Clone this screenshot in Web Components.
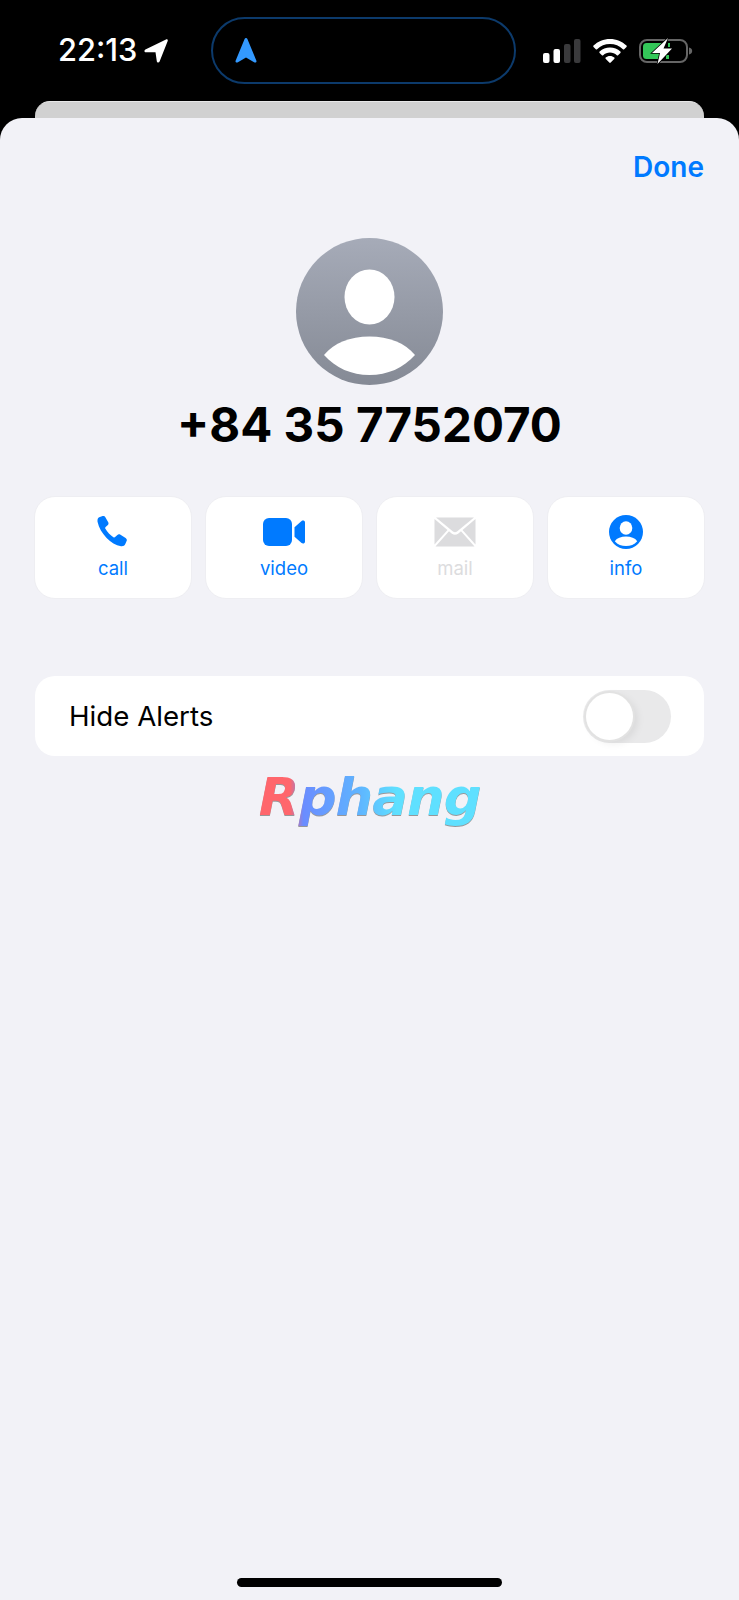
<!DOCTYPE html>
<html lang="en">
<head>
<meta charset="utf-8">
<title>Contact details</title>
<style>
    html, body {
        margin: 0;
        background: #000;
    }
    body {
        width: 739px;
        height: 1600px;
        overflow: hidden;
        font-family: 'Inter', 'Liberation Sans', sans-serif;
    }
</style>
</head>
<body>
<status-bar time="22:13"></status-bar>
<card-sheet>
    <contact-header name="+84 35 7752070"></contact-header>
    <action-row>
        <action-button label="call">
            <svg width="32" height="32" viewBox="0 0 32 32"><path fill="currentColor" d="M2.2 1.3 5.6 0c1-.4 2 0 2.6 1l3 5.3c.5.9.4 1.9-.3 2.6L8.600 11c-.5.500-.5 1.100-.2 1.700 1.600 2.900 5.100 6.700 8 8.500.6.400 1.200.4 1.700-.1l2.300-2.200c.8-.8 1.800-.9 2.700-.3l5.500 3.400c1.100.7 1.500 1.700 1.100 2.700l-1.400 3.400c-.7 1.700-2.300 2.500-4.300 2.200-5.200-.7-10.100-3.800-14.400-8.300C5.300 17.300 1.700 12 .6 6 .2 3.900.700 2.100 2.200 1.300Z"/></svg>
        </action-button>
        <action-button label="video">
            <svg width="42" height="28" viewBox="0 0 42 28"><rect x="0" y="0" width="29" height="28" rx="6" fill="currentColor"/><path fill="currentColor" d="M31.500 9.200 38.600 3c1.200-1 3.400-.4 3.400 1.300v19.400c0 1.700-2.200 2.300-3.400 1.300l-7.100-6.200Z"/></svg>
        </action-button>
        <action-button label="mail" disabled>
            <svg width="42" height="30" viewBox="0 0 42 30"><path fill="currentColor" d="M2 .5h38L23 14.500c-1.300 1-2.700 1-4 0Z"/><path fill="currentColor" d="M.5 2 13.500 13 .5 27.500Z"/><path fill="currentColor" d="M41.500 2 28.500 13 41.500 27.500Z"/><path fill="currentColor" d="M15 14.300 17.900 16.700c1.900 1.500 4.300 1.500 6.200 0L27 14.300 40.500 29.500H1.500Z"/></svg>
        </action-button>
        <action-button label="info">
            <svg width="34" height="34" viewBox="0 0 34 34"><circle cx="17" cy="17" r="17" fill="currentColor"/><ellipse cx="17" cy="13" rx="6.300" ry="6.800" fill="#fff"/><path fill="#fff" d="M5.800 26.200C8 23 12 21.500 17 21.500s9 1.500 11.200 4.700C25.300 29.500 21.500 31 17 31S8.700 29.500 5.800 26.200Z"/></svg>
        </action-button>
    </action-row>
    <toggle-row label="Hide Alerts"></toggle-row>
    <logo-mark text="Rphang"></logo-mark>
    <home-bar></home-bar>
</card-sheet>

<script>
    class StatusBar extends HTMLElement {
        constructor() {
            super();
            this.attachShadow({ mode: 'open' });
        }

        connectedCallback() {
            const time = this.getAttribute('time') || '';

            this.shadowRoot.innerHTML = `
                <style>
                    :host {
                        display: block;
                        background: #000;
                    }

                    .bar {
                        height: 101px;
                        padding: 17px 0 0 58px;
                        box-sizing: border-box;
                        display: flex;
                        align-items: flex-start;
                    }

                    .clock {
                        width: 153px;
                        height: 67px;
                        display: flex;
                        align-items: center;
                        gap: 7px;
                        color: #fff;
                        font: 500 30.800px/1 'Inter', sans-serif;
                    }

                    .island {
                        width: 305px;
                        height: 67px;
                        box-sizing: border-box;
                        border: 2px solid #0c3a6b;
                        border-radius: 34px;
                        background: #000;
                        display: flex;
                        align-items: center;
                        padding-left: 22px;
                    }

                    .indicators {
                        height: 67px;
                        margin-left: 27px;
                        display: flex;
                        align-items: center;
                        gap: 12px;
                    }

                    svg { display: block; }
                </style>
                <div class="bar">
                    <div class="clock">
                        <span>${time}</span>
                        <svg width="24" height="24" viewBox="0 0 24 24"><path fill="#fff" d="M22 .4c1.200-.5 2.100.4 1.700 1.600L15.600 22.500c-.6 1.500-2.500 1.400-2.800-.2l-1.300-9H2c-1.700 0-2.200-2-.6-2.800Z"/></svg>
                    </div>
                    <div class="island">
                        <svg width="22" height="25" viewBox="0 0 22 25"><path fill="#3399ff" d="M11 0c.7 0 1.100.4 1.400 1.100l9 21.600c.5 1.300-.7 2.300-1.900 1.700L11 19.500l-8.500 4.900c-1.200.6-2.400-.4-1.900-1.700l9-21.600C9.900.4 10.300 0 11 0Z"/></svg>
                    </div>
                    <div class="indicators">
                        <svg width="38" height="24" viewBox="0 0 38 24">
                            <rect x="0" y="14" width="6.500" height="10" rx="2" fill="#fff"/>
                            <rect x="10.500" y="10" width="6.500" height="14" rx="2" fill="#fff"/>
                            <rect x="21" y="5" width="6.500" height="19" rx="2" fill="#3a3a3c"/>
                            <rect x="31" y="0" width="6.500" height="24" rx="2" fill="#3a3a3c"/>
                        </svg>
                        <svg width="34" height="24" viewBox="0 0 34 24">
                            <path fill="#fff" d="M17 0c6.400 0 12.200 2.500 16.500 6.600.4.400.4.900 0 1.300l-2.300 2.300c-.4.400-.9.400-1.300 0C26.500 7 22 5.100 17 5.100S7.500 7 4.100 10.200c-.4.400-.9.400-1.300 0L.5 7.900c-.4-.4-.4-.9 0-1.300C4.800 2.500 10.600 0 17 0Z"/>
                            <path fill="#fff" d="M17 8.500c4 0 7.600 1.500 10.400 4.100.4.400.4.900 0 1.300l-2.300 2.300c-.4.400-.9.400-1.300 0-1.800-1.600-4.200-2.600-6.800-2.600s-5 1-6.800 2.600c-.4.400-.9.400-1.300 0l-2.300-2.300c-.4-.4-.4-.9 0-1.300C9.400 10 13 8.500 17 8.500Z"/>
                            <path fill="#fff" d="M17 17c1.700 0 3.200.6 4.300 1.600.4.300.4.800.1 1.100l-3.700 3.900c-.4.400-1 .4-1.400 0l-3.700-3.900c-.3-.3-.3-.8.100-1.100 1.100-1 2.600-1.600 4.300-1.600Z"/>
                        </svg>
                        <svg width="54" height="26" viewBox="0 0 54 26">
                            <rect x="1" y="2" width="47" height="22" rx="7" fill="none" stroke="#666" stroke-width="2"/>
                            <path fill="#34c759" d="M7.500 5H24v16H7.500A3.500 3.500 0 0 1 4 17.500v-9A3.500 3.500 0 0 1 7.500 5Z"/>
                            <path fill="#34c759" d="M29 5h2v4h-2zM27 17h3v4h-3z"/>
                            <path fill="#fff" stroke="#000" stroke-width="1.500" paint-order="stroke" d="M29 0 13 15h8L18.500 26 33 10.500h-8.500Z"/>
                            <path fill="#666" d="M50 9.500c2 .3 3.200 1.700 3.200 3.500s-1.200 3.200-3.200 3.500Z"/>
                        </svg>
                    </div>
                </div>
            `;
        }
    }

    class CardSheet extends HTMLElement {
        constructor() {
            super();
            this.attachShadow({ mode: 'open' });
        }

        connectedCallback() {
            this.shadowRoot.innerHTML = `
                <style>
                    :host {
                        display: block;
                    }

                    .behind {
                        height: 17px;
                        margin: 0 35px;
                        box-sizing: border-box;
                        border-top: 1px solid #e8e8e8;
                        background: #d1d1d1;
                        border-radius: 15px 15px 0 0;
                    }

                    .sheet {
                        height: 1482px;
                        background: #f2f2f7;
                        border-radius: 22px 22px 0 0;
                        padding: 0 35px;
                        box-sizing: border-box;
                        display: flex;
                        flex-direction: column;
                    }

                    .top {
                        display: flex;
                        justify-content: flex-end;
                        padding-top: 32px;
                    }

                    .done {
                        color: #007aff;
                        font: 600 28px/34px 'Inter', sans-serif;
                    }
                </style>
                <div class="behind"></div>
                <div class="sheet">
                    <div class="top"><span class="done">Done</span></div>
                    <slot></slot>
                </div>
            `;
        }
    }

    class ContactHeader extends HTMLElement {
        constructor() {
            super();
            this.attachShadow({ mode: 'open' });
        }

        connectedCallback() {
            const name = this.getAttribute('name') || '';

            this.shadowRoot.innerHTML = `
                <style>
                    :host {
                        display: flex;
                        flex-direction: column;
                        align-items: center;
                        padding-top: 54px;
                    }

                    svg { display: block; }

                    .name {
                        margin-top: 11px;
                        color: #000;
                        white-space: nowrap;
                        font: 700 47.500px/58px 'Inter', sans-serif;
                    }
                </style>
                <svg width="147" height="147" viewBox="0 0 147 147">
                    <defs>
                        <linearGradient id="face" x1="0" y1="0" x2="0" y2="1">
                            <stop offset="0" stop-color="#a6abb8"/>
                            <stop offset="1" stop-color="#858a95"/>
                        </linearGradient>
                    </defs>
                    <circle cx="73.500" cy="73.500" r="73.500" fill="url(#face)"/>
                    <ellipse cx="73.500" cy="59" rx="25" ry="27.500" fill="#fff"/>
                    <path fill="#fff" d="M28 117C38 105 54 98.500 73.500 98.500S109 105 119 117C107.500 130 91.500 137 73.500 137S39.500 130 28 117Z"/>
                </svg>
                <div class="name">${name}</div>
            `;
        }
    }

    class ActionRow extends HTMLElement {
        constructor() {
            super();
            this.attachShadow({ mode: 'open' });
        }

        connectedCallback() {
            this.shadowRoot.innerHTML = `
                <style>
                    :host {
                        display: grid;
                        grid-template-columns: repeat(4, 158px);
                        justify-content: space-between;
                        margin: 42px -1px 0;
                    }
                </style>
                <slot></slot>
            `;
        }
    }

    class ActionButton extends HTMLElement {
        constructor() {
            super();
            this.attachShadow({ mode: 'open' });
        }

        connectedCallback() {
            const label = this.getAttribute('label') || '';

            this.shadowRoot.innerHTML = `
                <style>
                    :host {
                        display: flex;
                        flex-direction: column;
                        align-items: center;
                        height: 103px;
                        box-sizing: border-box;
                        padding-top: 19px;
                        background: #fff;
                        border: 1px solid #eeeef2;
                        border-radius: 21px;
                        color: #007aff;
                    }

                    :host([disabled]) {
                        color: #dcdcde;
                    }

                    .icon {
                        height: 32px;
                        display: flex;
                        align-items: center;
                        justify-content: center;
                    }

                    .label {
                        margin-top: 8px;
                        font: 400 18.500px/24px 'Inter', sans-serif;
                    }
                </style>
                <div class="icon"><slot></slot></div>
                <div class="label">${label}</div>
            `;
        }
    }

    class ToggleRow extends HTMLElement {
        constructor() {
            super();
            this.attachShadow({ mode: 'open' });
        }

        connectedCallback() {
            const label = this.getAttribute('label') || '';

            this.shadowRoot.innerHTML = `
                <style>
                    :host {
                        display: flex;
                        align-items: center;
                        justify-content: space-between;
                        height: 80px;
                        margin-top: 77px;
                        padding: 0 33px 0 34px;
                        box-sizing: border-box;
                        background: #fff;
                        border-radius: 20px;
                    }

                    .label {
                        color: #000;
                        font: 400 27.700px/34px 'Inter', sans-serif;
                    }

                    .track {
                        position: relative;
                        width: 88px;
                        height: 53px;
                        background: #e9e9ea;
                        border-radius: 27px;
                    }

                    .knob {
                        position: absolute;
                        left: 3px;
                        top: 3px;
                        width: 47px;
                        height: 47px;
                        background: #fff;
                        border-radius: 50%;
                        box-shadow: 0 0 0 2px #e2e2e2, 4px 3px 8px rgba(0,0,0,0.08);
                    }
                </style>
                <span class="label">${label}</span>
                <div class="track"><div class="knob"></div></div>
            `;
        }
    }

    class LogoMark extends HTMLElement {
        constructor() {
            super();
            this.attachShadow({ mode: 'open' });
        }

        connectedCallback() {
            const text = this.getAttribute('text') || '';

            this.shadowRoot.innerHTML = `
                <style>
                    :host {
                        display: flex;
                        justify-content: center;
                        margin-top: 6px;
                    }

                    .mark {
                        font: italic 700 52px/70px 'DejaVu Sans', sans-serif;
                        letter-spacing: -1px;
                        transform: scaleX(1.020);
                        color: transparent;
                        background: linear-gradient(90deg, #ff666c 0%, #ff666c 14%, #6a8cff 20%, #5fb4ff 45%, #5fe0ff 62%, #5fe0ff 100%);
                        -webkit-background-clip: text;
                        background-clip: text;
                        filter: drop-shadow(0 1px 0 rgba(90,90,90,0.6)) blur(0.7px);
                    }
                </style>
                <div class="mark">${text}</div>
            `;
        }
    }

    class HomeBar extends HTMLElement {
        constructor() {
            super();
            this.attachShadow({ mode: 'open' });
        }

        connectedCallback() {
            this.shadowRoot.innerHTML = `
                <style>
                    :host {
                        display: block;
                        width: 265px;
                        height: 9px;
                        margin: auto auto 13px;
                        background: #000;
                        border-radius: 5px;
                    }
                </style>
            `;
        }
    }

    customElements.define('status-bar', StatusBar);
    customElements.define('card-sheet', CardSheet);
    customElements.define('contact-header', ContactHeader);
    customElements.define('action-row', ActionRow);
    customElements.define('action-button', ActionButton);
    customElements.define('toggle-row', ToggleRow);
    customElements.define('logo-mark', LogoMark);
    customElements.define('home-bar', HomeBar);
</script>
</body>
</html>
